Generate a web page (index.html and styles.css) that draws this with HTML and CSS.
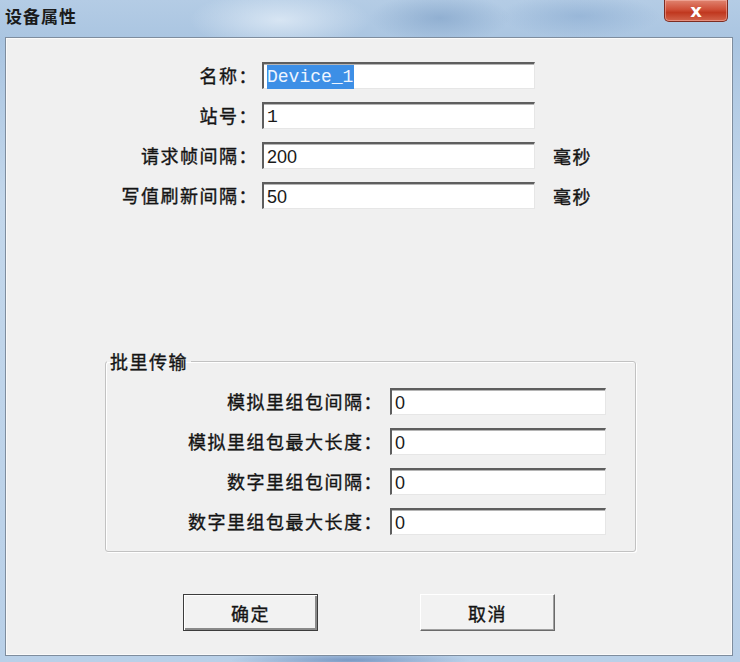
FILE: index.html
```html
<!DOCTYPE html>
<html lang="zh-CN">
<head>
  <meta charset="utf-8" />
  <meta name="viewport" content="width=device-width,initial-scale=1" />
  <title>设备属性</title>
  <link rel="stylesheet" href="styles.css">
</head>
<body>
  <div class="window">
    <div class="titlebar">
      <span class="title">设备属性</span>
      <button class="close" type="button">x</button>
    </div>

    <div class="client">
      <div class="fields top">
        <label>名称：</label>
        <div class="edit mono"><span class="sel">Device_1</span></div>
        <span class="unit"></span>

        <label>站号：</label>
        <div class="edit mono">1</div>
        <span class="unit"></span>

        <label>请求帧间隔：</label>
        <div class="edit">200</div>
        <span class="unit">毫秒</span>

        <label>写值刷新间隔：</label>
        <div class="edit">50</div>
        <span class="unit">毫秒</span>
      </div>

      <fieldset class="batch">
        <legend>批里传输</legend>
        <div class="fields group">
          <label>模拟里组包间隔：</label>
          <div class="edit">0</div>

          <label>模拟里组包最大长度：</label>
          <div class="edit">0</div>

          <label>数字里组包间隔：</label>
          <div class="edit">0</div>

          <label>数字里组包最大长度：</label>
          <div class="edit">0</div>
        </div>
      </fieldset>

      <div class="buttons">
        <button class="btn default" type="button">确定</button>
        <button class="btn" type="button">取消</button>
      </div>
    </div>
  </div>
</body>
</html>
```

FILE: styles.css
```css
:root {
  --face:#f0f0f0; --text:#141414; --dark:#5e5e5e; --light:#e6e6e6;
}
*{box-sizing:border-box;margin:0;padding:0}
body{width:740px;height:662px;overflow:hidden;font-family:"Noto Sans CJK SC","Noto Sans",sans-serif;color:var(--text)}

/* window frame: blurred aero glass */
.window{width:740px;height:662px;display:flex;flex-direction:column;
  background:
    radial-gradient(ellipse 90px 30px at 280px 20px, rgba(225,236,247,.8), transparent),
    radial-gradient(ellipse 70px 25px at 440px 18px, rgba(120,155,195,.55), transparent),
    radial-gradient(ellipse 80px 22px at 580px 16px, rgba(130,165,205,.5), transparent),
    radial-gradient(ellipse 120px 8px at 350px 660px, rgba(95,130,180,.7), transparent),
    linear-gradient(180deg,#b4cce5 0,#aac5e1 40px,#c3d7eb 200px,#b9d0e8 100%)}

.titlebar{height:37px;display:flex;justify-content:space-between;align-items:flex-start}
.title{margin:6px 0 0 5px;font-size:17px;line-height:20px;font-weight:bold;letter-spacing:1px;color:#1b1b1b}
.close{width:64px;height:22px;margin-right:12px;border:1px solid #7c2c22;border-top:none;border-radius:0 0 5px 5px;
  background:linear-gradient(180deg,#e08470 0,#cf4f38 45%,#c0381f 60%,#d2644c 100%);
  color:#fff;font:bold 18px/18px "DejaVu Sans",sans-serif;box-shadow:inset 0 0 0 1px rgba(255,200,190,.45)}

.client{flex:1;margin:0 7px 6px 5px;background:var(--face);border:1px solid #7e8d9e;
  box-shadow:inset 0 0 0 1px #fafafa}

/* label / edit rows */
.fields{display:grid;grid-auto-rows:27px;row-gap:13px;align-items:center}
.fields label{text-align:right;font-size:18px;line-height:27px;letter-spacing:1.5px;white-space:nowrap;-webkit-text-stroke:.35px currentColor}
.top{grid-template-columns:250px 273px auto;column-gap:4px;margin:24px 0 0 2px}
.top .unit{margin-left:14px;font-size:18px;letter-spacing:1.5px;-webkit-text-stroke:.35px currentColor}
.group{grid-template-columns:277px 216px;column-gap:7px;margin:17px 0 0 0}

.edit{height:27px;background:#fff;padding:1px 0 0 3px;font:18px/24px "Liberation Sans",Arial,sans-serif;color:#1a1a1a;
  border-style:solid;border-width:2px 1px 1px 2px;border-color:var(--dark) var(--light) var(--light) var(--dark);
  box-shadow:inset 0 1px 0 #b5b5b5}
.mono{font-family:"Liberation Mono","Courier New",monospace}
.sel{display:inline-block;background:#3d8fe6;color:#eef5ff;line-height:24px;padding-right:1px}

/* group box */
.batch{width:531px;margin:142px 0 0 99px;padding:0 0 16px;border:1px solid #c2c2c2;border-radius:3px;
  box-shadow:1px 1px 0 #fff, inset 1px 1px 0 #fff}
.batch legend{margin-left:1px;padding:0 3px;font-size:18px;line-height:20px;letter-spacing:1.5px;-webkit-text-stroke:.35px currentColor}

.buttons{display:flex;gap:102px;margin:42px 0 0 177px}
.btn{width:135px;height:37px;background:#f2f2f2;font-family:"Noto Sans CJK SC",sans-serif;font-size:18px;letter-spacing:1.5px;color:var(--text);
  -webkit-text-stroke:.35px currentColor;
  border:1px solid;border-color:#fff #6a6a6a #6a6a6a #fff;box-shadow:inset -1px -1px 0 #a0a0a0}
.btn.default{border:1px solid #3c3c3c;box-shadow:inset 1px 1px 0 #fff,inset -2px -2px 0 #8a8a8a}
```
